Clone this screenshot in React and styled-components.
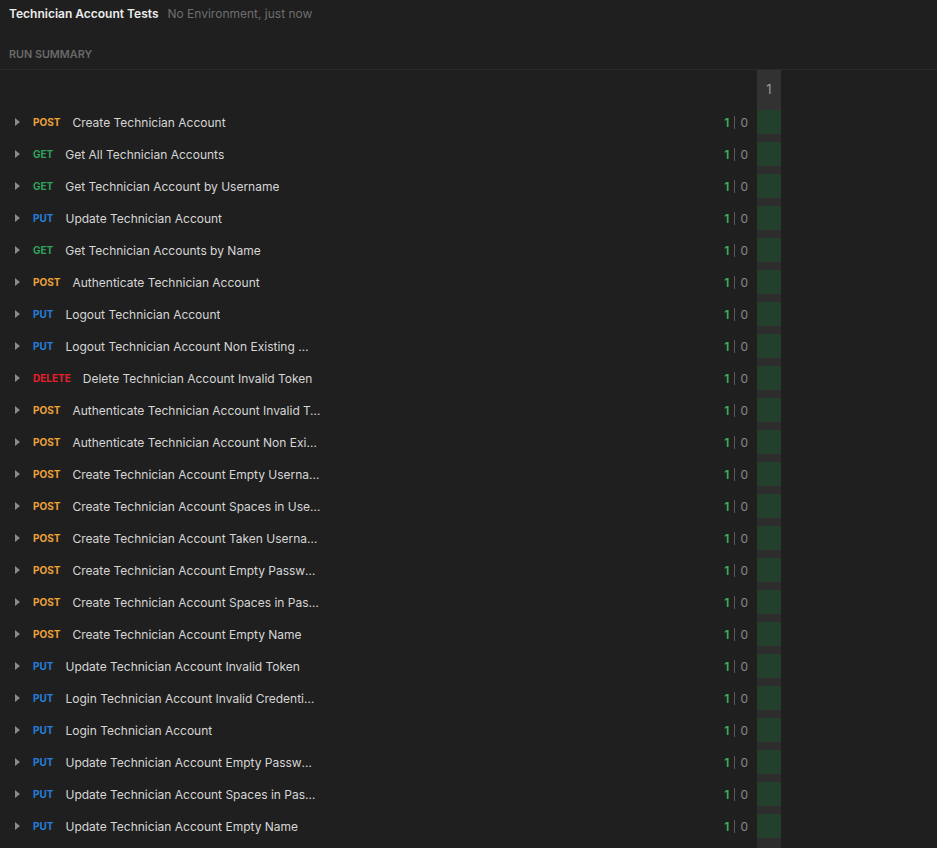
import styled, { createGlobalStyle } from "styled-components";

const GlobalStyle = createGlobalStyle`
  html, body {
    margin: 0;
    padding: 0;
    background: #1f1f1f;
  }
  body {
    font-family: Inter, "Noto Sans", sans-serif;
    -webkit-font-smoothing: antialiased;
  }
`;

const Page = styled.div`
  width: 937px;
  height: 848px;
  overflow: hidden;
  background: #1f1f1f;
  color: #d4d4d4;
`;

const TitleBar = styled.div`
  display: flex;
  align-items: baseline;
  gap: 9px;
  height: 28px;
  padding: 6px 9px 0;
  box-sizing: border-box;
`;

const Title = styled.span`
  font-size: 12px;
  font-weight: 600;
  color: #ececec;
`;

const Subtitle = styled.span`
  font-size: 12px;
  color: #6e6e6e;
`;

const SectionHeader = styled.div`
  height: 42px;
  padding: 20px 9px 0;
  box-sizing: border-box;
  font-size: 10.8px;
  font-weight: 600;
  color: #6a6a6a;
  border-bottom: 1px solid #2c2c2c;
`;

const Body = styled.div`
  display: flex;
`;

const List = styled.div`
  width: 757px;
  padding-top: 40px;
  display: flex;
  flex-direction: column;
`;

const Row = styled.div`
  height: 32px;
  display: flex;
  align-items: flex-start;
`;

const RowInner = styled.div`
  height: 24px;
  flex: 1;
  display: flex;
  align-items: center;
  padding: 0 9px 0 15px;
`;

const Caret = styled.span`
  width: 0;
  height: 0;
  border-top: 4px solid transparent;
  border-bottom: 4px solid transparent;
  border-left: 5px solid #8a8a8a;
  margin-right: 13px;
`;

const methodColors = {
  GET: "#2ea35a",
  POST: "#eda23a",
  PUT: "#2580dd",
  DELETE: "#e8202b",
};

const Method = styled.span`
  font-size: 10px;
  font-weight: 700;
  color: ${(p) => methodColors[p.$method]};
  margin-right: 12px;
`;

const Name = styled.span`
  font-size: 12px;
  color: #d6d6d6;
  max-width: 250px;
  white-space: nowrap;
  overflow: hidden;
  text-overflow: ellipsis;
`;

const Counts = styled.span`
  margin-left: auto;
  display: flex;
  align-items: center;
  font-size: 12px;
`;

const Passed = styled.span`
  color: #3fae5e;
  font-weight: 600;
`;

const Divider = styled.span`
  width: 1px;
  height: 13px;
  background: #5a5a5a;
  margin: 0 5px;
`;

const Failed = styled.span`
  color: #8a8a8a;
`;

const RunColumn = styled.div`
  width: 24px;
  min-height: 778px;
  background: #2d2d2d;
  display: flex;
  flex-direction: column;
`;

const RunHeader = styled.div`
  height: 40px;
  background: #323232;
  display: flex;
  align-items: center;
  justify-content: center;
  padding-bottom: 3px;
  box-sizing: border-box;
  font-size: 13px;
  color: #9a9a9a;
`;

const RunCell = styled.div`
  height: 24px;
  margin-bottom: 8px;
  background: #22402b;
`;

const requests = [
  ["POST", "Create Technician Account"],
  ["GET", "Get All Technician Accounts"],
  ["GET", "Get Technician Account by Username"],
  ["PUT", "Update Technician Account"],
  ["GET", "Get Technician Accounts by Name"],
  ["POST", "Authenticate Technician Account"],
  ["PUT", "Logout Technician Account"],
  ["PUT", "Logout Technician Account Non Existing Username"],
  ["DELETE", "Delete Technician Account Invalid Token"],
  ["POST", "Authenticate Technician Account Invalid Token"],
  ["POST", "Authenticate Technician Account Non Existing"],
  ["POST", "Create Technician Account Empty Username"],
  ["POST", "Create Technician Account Spaces in Username"],
  ["POST", "Create Technician Account Taken Username"],
  ["POST", "Create Technician Account Empty Password"],
  ["POST", "Create Technician Account Spaces in Password"],
  ["POST", "Create Technician Account Empty Name"],
  ["PUT", "Update Technician Account Invalid Token"],
  ["PUT", "Login Technician Account Invalid Credentials"],
  ["PUT", "Login Technician Account"],
  ["PUT", "Update Technician Account Empty Password"],
  ["PUT", "Update Technician Account Spaces in Password"],
  ["PUT", "Update Technician Account Empty Name"],
];

export default function App() {
  return (
    <Page>
      <GlobalStyle />
      <TitleBar>
        <Title>Technician Account Tests</Title>
        <Subtitle>No Environment, just now</Subtitle>
      </TitleBar>
      <SectionHeader>RUN SUMMARY</SectionHeader>
      <Body>
        <List>
          {requests.map(([method, name], i) => (
            <Row key={i}>
              <RowInner>
                <Caret />
                <Method $method={method}>{method}</Method>
                <Name>{name}</Name>
                <Counts>
                  <Passed>1</Passed>
                  <Divider />
                  <Failed>0</Failed>
                </Counts>
              </RowInner>
            </Row>
          ))}
        </List>
        <RunColumn>
          <RunHeader>1</RunHeader>
          {requests.map((_, i) => (
            <RunCell key={i} />
          ))}
        </RunColumn>
      </Body>
    </Page>
  );
}
